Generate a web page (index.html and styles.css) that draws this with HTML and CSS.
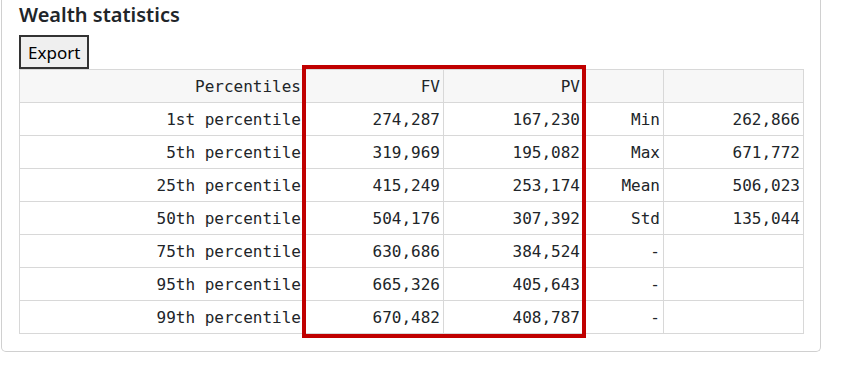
FILE: index.html
```html
<!DOCTYPE html>
<html>
<head>
<meta charset="utf-8">
<link rel="stylesheet" href="styles.css">
</head>
<body>
<div class="card">
  <h2 class="title">Wealth statistics</h2>
  <button class="btn">Export</button>
  <div class="table-wrap">
    <table class="stats">
      <colgroup>
        <col class="c1"><col class="c2"><col class="c3"><col class="c4"><col class="c5">
      </colgroup>
      <thead>
        <tr><th>Percentiles</th><th>FV</th><th>PV</th><th></th><th></th></tr>
      </thead>
      <tbody>
        <tr><td>1st percentile</td><td>274,287</td><td>167,230</td><td>Min</td><td>262,866</td></tr>
        <tr><td>5th percentile</td><td>319,969</td><td>195,082</td><td>Max</td><td>671,772</td></tr>
        <tr><td>25th percentile</td><td>415,249</td><td>253,174</td><td>Mean</td><td>506,023</td></tr>
        <tr><td>50th percentile</td><td>504,176</td><td>307,392</td><td>Std</td><td>135,044</td></tr>
        <tr><td>75th percentile</td><td>630,686</td><td>384,524</td><td>-</td><td></td></tr>
        <tr><td>95th percentile</td><td>665,326</td><td>405,643</td><td>-</td><td></td></tr>
        <tr><td>99th percentile</td><td>670,482</td><td>408,787</td><td>-</td><td></td></tr>
      </tbody>
    </table>
    <div class="highlight"></div>
  </div>
</div>
</body>
</html>
```
FILE: styles.css
```css
html, body {
  margin: 0;
  padding: 0;
  background: #ffffff;
}
body {
  font-family: "Noto Sans", "Open Sans", sans-serif;
  color: #212529;
}
.card {
  margin-left: 1px;
  width: 820px;
  border: 1px solid #d0d0d0;
  border-top: none;
  border-radius: 0 0 5px 5px;
  padding: 0 17px 17px 17px;
  box-sizing: border-box;
}
.title {
  margin: 0;
  padding-top: 1px;
  font-size: 20px;
  font-weight: 600;
  line-height: 28px;
  color: #212529;
}
.btn {
  display: block;
  margin-top: 6px;
  height: 34px;
  padding: 0 7px;
  font-family: "Noto Sans", "Open Sans", sans-serif;
  font-size: 17px;
  color: #000;
  background: #efefef;
  border: 2px solid #333333;
  border-radius: 0;
}
.table-wrap {
  position: relative;
  width: 784px;
}
.stats {
  border-collapse: collapse;
  table-layout: fixed;
  width: 784px;
  font-family: "DejaVu Sans Mono", monospace;
  font-size: 16px;
  color: #212529;
}
.c1 { width: 285px; }
.c2 { width: 139px; }
.c3 { width: 140px; }
.c4 { width: 80px; }
.c5 { width: 140px; }
.stats th, .stats td {
  border: 1px solid #d8d8d8;
  height: 33px;
  padding: 0 3px 0 4px;
  text-align: right;
  font-weight: 400;
  box-sizing: border-box;
  white-space: nowrap;
}
.stats thead th {
  background: #f7f7f7;
}
.highlight {
  position: absolute;
  left: 283px;
  top: -4px;
  width: 284px;
  height: 273px;
  border: 4px solid #c00000;
  box-sizing: border-box;
  pointer-events: none;
}
```
